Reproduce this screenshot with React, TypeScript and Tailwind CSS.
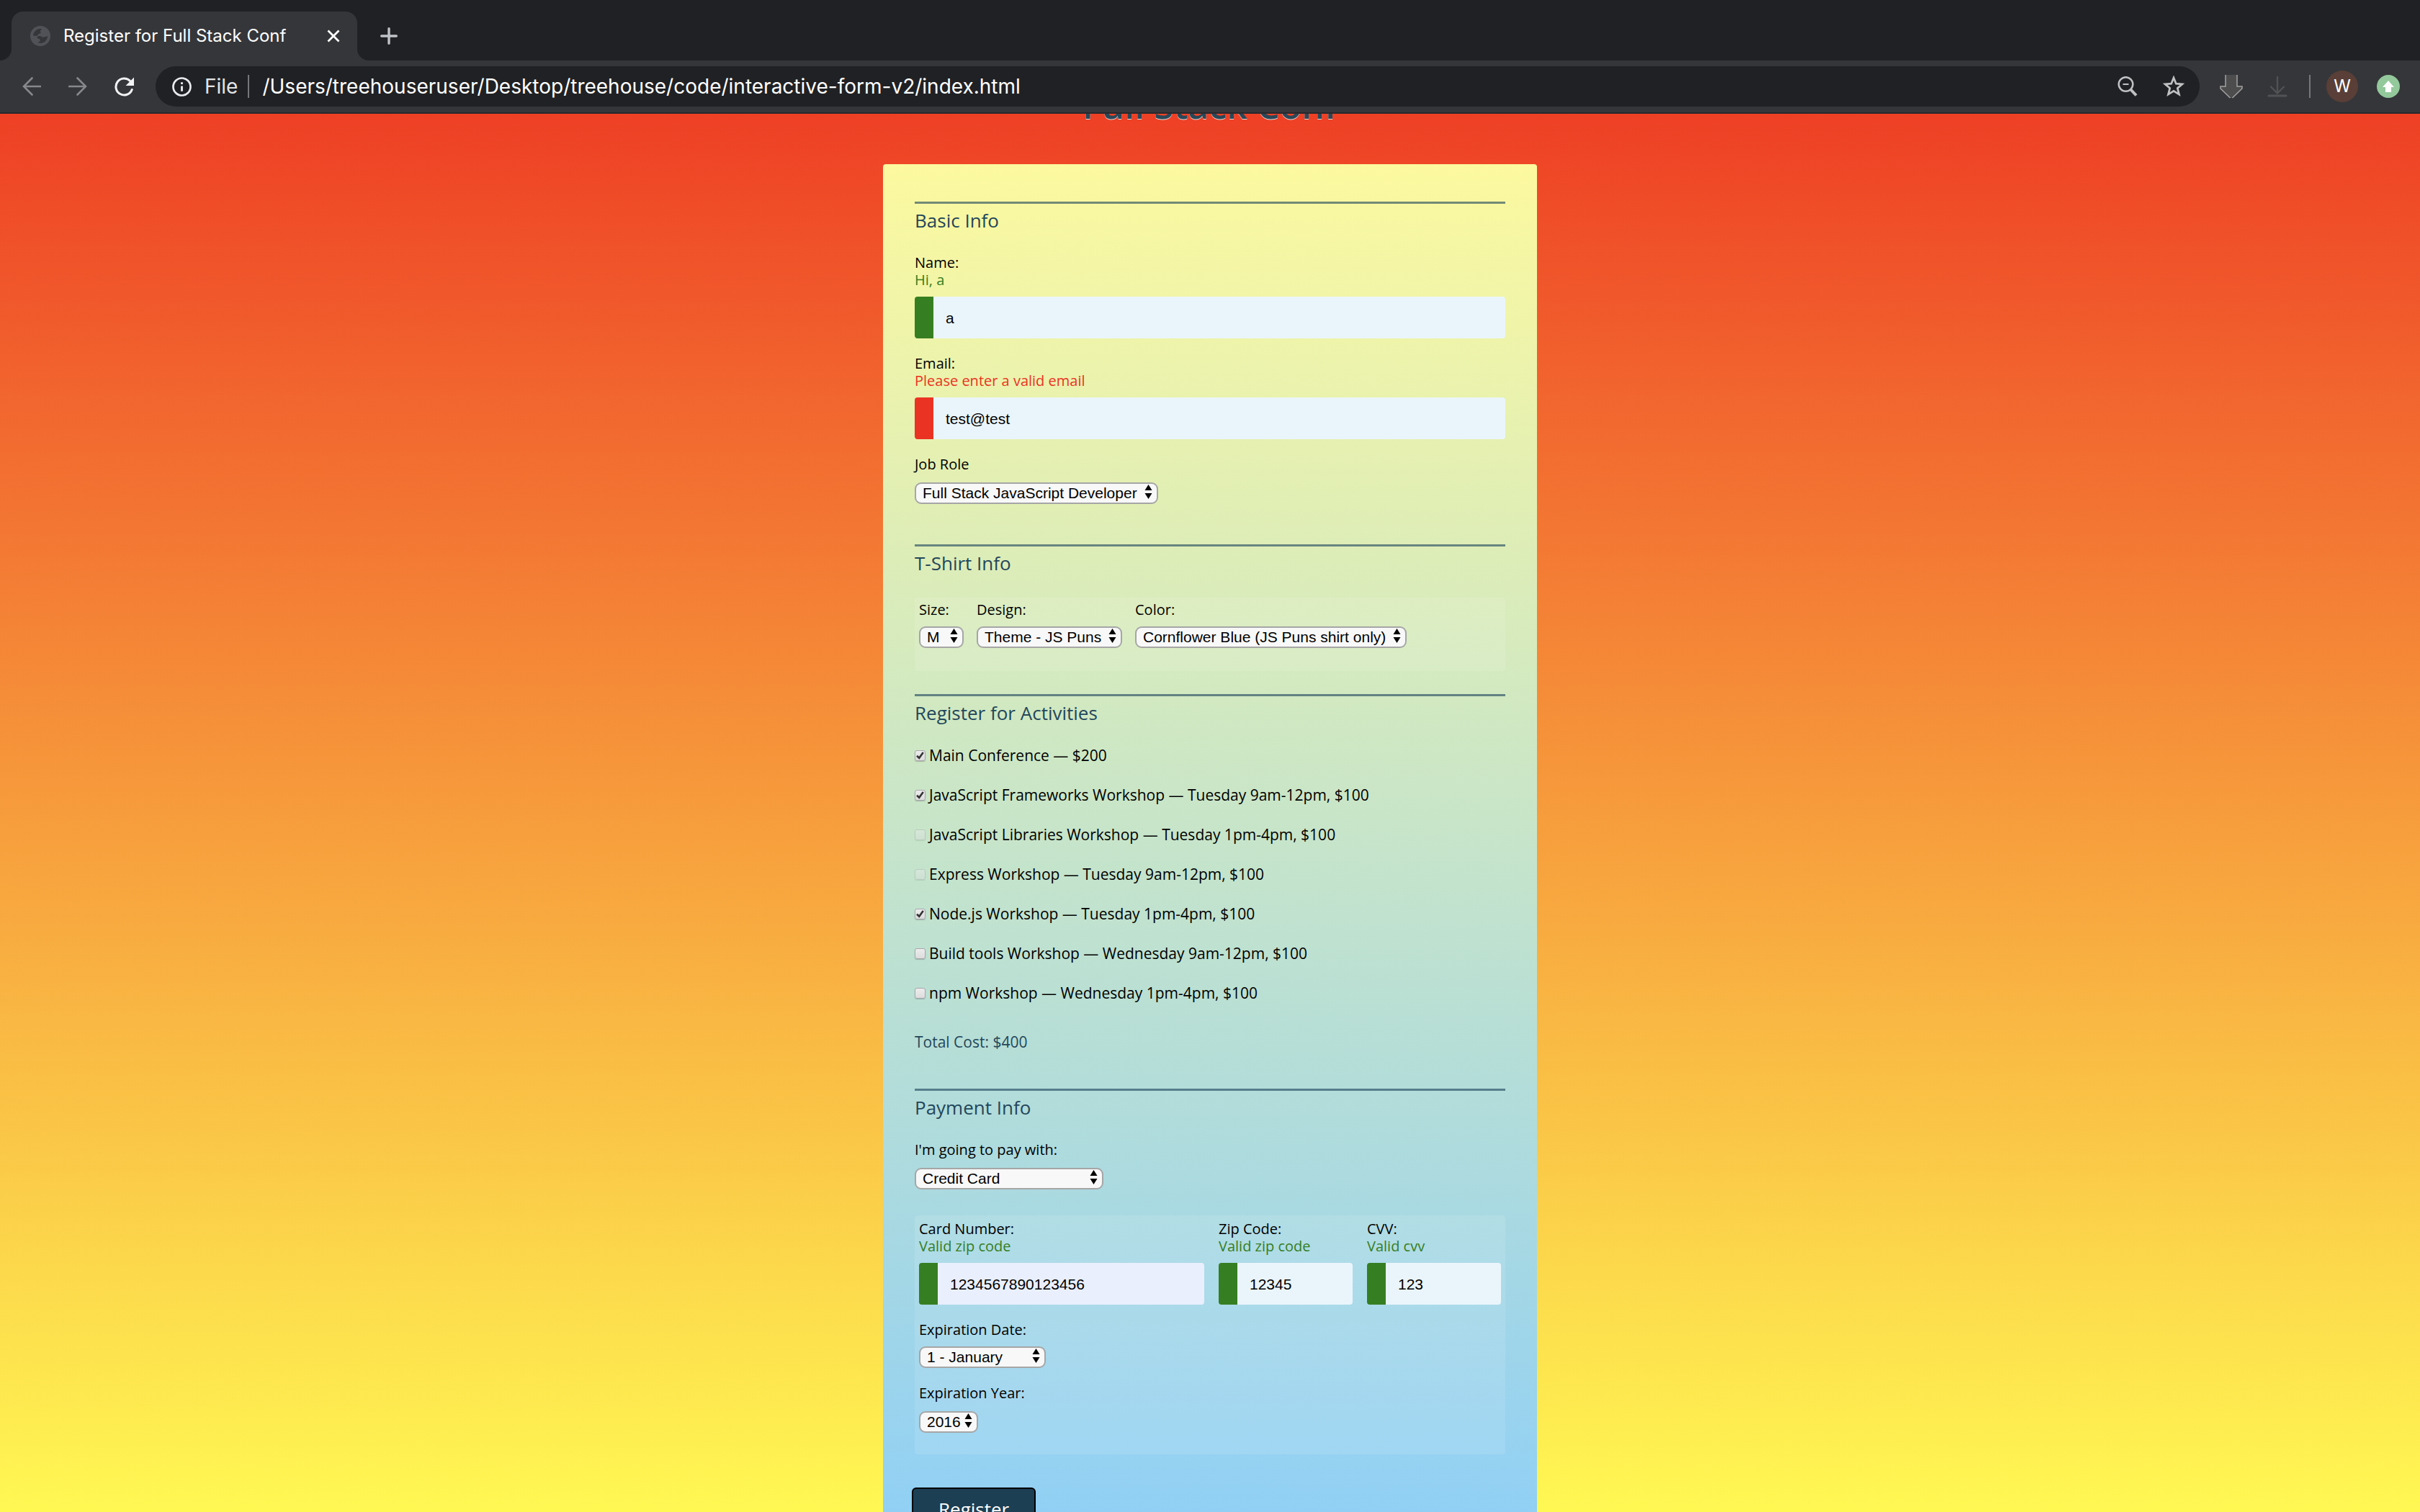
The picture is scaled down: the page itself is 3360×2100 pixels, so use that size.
import type { ReactNode } from 'react';

const workshops = [
  { id: 'all', text: 'Main Conference — $200', checked: true },
  { id: 'js-frameworks', text: 'JavaScript Frameworks Workshop — Tuesday 9am-12pm, $100', checked: true },
  { id: 'js-libs', text: 'JavaScript Libraries Workshop — Tuesday 1pm-4pm, $100', disabled: true },
  { id: 'express', text: 'Express Workshop — Tuesday 9am-12pm, $100', disabled: true },
  { id: 'node', text: 'Node.js Workshop — Tuesday 1pm-4pm, $100', checked: true },
  { id: 'build-tools', text: 'Build tools Workshop — Wednesday 9am-12pm, $100' },
  { id: 'npm', text: 'npm Workshop — Wednesday 1pm-4pm, $100' },
];

function TabStrip() {
  return (
    <div className="flex h-[84px] items-end bg-[#202124] pl-4">
      <div className="relative flex h-[68px] w-[480px] items-center rounded-t-2xl bg-[#35363a] pr-6 pl-[26px]">
        <svg className="absolute bottom-0 -left-4 size-4 fill-[#35363a]" viewBox="0 0 16 16" aria-hidden="true">
          <path d="M16 0v16H0A16 16 0 0 0 16 0z" />
        </svg>
        <svg className="absolute -right-4 bottom-0 size-4 fill-[#35363a]" viewBox="0 0 16 16" aria-hidden="true">
          <path d="M0 0v16h16A16 16 0 0 1 0 0z" />
        </svg>
        <svg className="size-7 shrink-0" viewBox="0 0 28 28" aria-hidden="true">
          <circle cx="14" cy="14" r="14" fill="#505257" />
          <path
            fill="#35363a"
            d="M4 13.5C4.200 9 8 4.500 13 4l3 .2c-.3 1.600-1.800 1.500-2.200 2.800-.3 1.300 1 1.600.8 2.800-.3 1.200-2 .8-3 1.300-1 .6-.6 1.900-1.700 2.400-1.200.5-3.500.3-5.900 0z"
          />
          <path
            fill="#35363a"
            d="M11.500 14.200c2.500-.4 4 .2 4.600 1.600 1.500.3 3-.6 4.400-.6 1.800 0 2.400-1.400 3.500-1.300.2 4.500-3.500 9.700-9.500 10.100-1.700 0-3-.3-4-.7.700-1.500 2.700-.8 3.200-2.300.4-1.300-.9-1.900-.6-3.100-2 .2-3.800-.8-3.600-2.200.1-.8 1-1.300 2-1.500z"
          />
        </svg>
        <span className="ml-[18px] flex-1 text-2xl whitespace-nowrap text-white">Register for Full Stack Conf</span>
        <button type="button" aria-label="Close tab">
          <svg className="size-[18px] stroke-white" viewBox="0 0 18 18" strokeWidth="2.800" aria-hidden="true">
            <path d="M1.500 1.500l15 15M16.500 1.500l-15 15" />
          </svg>
        </button>
      </div>
      <button type="button" aria-label="New tab" className="mb-[22px] ml-8">
        <svg className="size-6 stroke-[#c0c3c7]" viewBox="0 0 24 24" strokeWidth="3.400" strokeLinecap="round" aria-hidden="true">
          <path d="M12 1.700v20.600M1.700 12h20.600" />
        </svg>
      </button>
    </div>
  );
}

function Toolbar() {
  return (
    <div className="flex h-[74px] items-center border-b-2 border-[#28292c] bg-[#35363a] pr-7 pl-[31px]">
      <button type="button" aria-label="Back">
        <svg className="size-[26px] fill-none stroke-[#86888a]" viewBox="0 0 26 26" strokeWidth="2.600" strokeLinecap="round" aria-hidden="true">
          <path d="M25 13H2M13.500 1.500L2 13l11.500 11.500" />
        </svg>
      </button>
      <button type="button" aria-label="Forward" className="ml-[38px]">
        <svg className="size-[26px] fill-none stroke-[#86888a]" viewBox="0 0 26 26" strokeWidth="2.600" strokeLinecap="round" aria-hidden="true">
          <path d="M1 13h23M12.500 1.500L24 13 12.500 24.500" />
        </svg>
      </button>
      <button type="button" aria-label="Reload" className="ml-[38px]">
        <svg className="size-[27px]" viewBox="0 0 27 27" aria-hidden="true">
          <path d="M24.200 17.500A11.500 11.500 0 1 1 21.700 5.500" className="fill-none stroke-[#f1f3f4]" strokeWidth="3" strokeLinecap="round" />
          <path d="M27 .5V12H15.500z" className="fill-[#f1f3f4]" />
        </svg>
      </button>
      <div className="ml-[30px] flex h-14 flex-1 items-center rounded-full bg-[#202124] pr-[21px] pl-[23px]">
        <svg className="size-[27px] fill-none stroke-[#e8eaed]" viewBox="0 0 27 27" aria-hidden="true">
          <circle cx="13.500" cy="13.500" r="12" strokeWidth="2.700" />
          <path d="M13.500 12.500v7.200M13.500 7.200v2.900" strokeWidth="2.900" />
        </svg>
        <span className="ml-[18px] text-[28px] text-[#e2e4e6]">File</span>
        <span className="ml-[14px] h-8 w-0.5 bg-[#75777a]" />
        <input
          aria-label="Address"
          className="ml-[18px] min-w-0 flex-1 bg-transparent text-[28px] text-white outline-none"
          defaultValue="/Users/treehouseruser/Desktop/treehouse/code/interactive-form-v2/index.html"
        />
        <button type="button" aria-label="Zoom out">
          <svg className="size-7 fill-none stroke-[#bfc1c3]" viewBox="0 0 28 28" aria-hidden="true">
            <circle cx="11.500" cy="11" r="9.800" strokeWidth="2.500" />
            <path d="M7.500 11h8" strokeWidth="2" />
            <path d="M18.500 18.500l7.500 8" strokeWidth="4" />
          </svg>
        </button>
        <button type="button" aria-label="Bookmark" className="ml-[35px]">
          <svg className="size-[30px] fill-none stroke-[#bfc1c3]" viewBox="0 0 30 30" strokeWidth="2.700" aria-hidden="true">
            <path d="M15 3l3.300 8.200 8.600.6-6.600 5.600 2.200 8.700L15 21.300l-7.500 4.800 2.200-8.700-6.600-5.600 8.600-.6z" />
          </svg>
        </button>
      </div>
      <button type="button" aria-label="Downloader" className="ml-7">
        <svg className="h-[34px] w-8" viewBox="0 0 32 34" aria-hidden="true">
          <path d="M8 1v16H1v3l13.500 13h3L31 20v-3h-7V1z" fill="#4d4d4d" />
          <path d="M8 1v16H1v3l13.500 13M24 1v16h7v3L17.500 33" fill="none" stroke="#a3a3a3" strokeWidth="1.500" />
        </svg>
      </button>
      <button type="button" aria-label="Save" className="ml-[34px]">
        <svg className="h-[30px] w-7 fill-none stroke-[#505254]" viewBox="0 0 28 30" strokeWidth="2.400" strokeLinecap="round" aria-hidden="true">
          <path d="M14 2v22M5 15.500l9 9 9-9" />
          <path d="M2 28h24" strokeWidth="3.200" />
        </svg>
      </button>
      <span className="ml-[30px] h-8 w-0.5 bg-[#75777a]" />
      <button type="button" aria-label="Profile" className="ml-[22px] grid size-11 place-items-center rounded-full bg-[#593f37] text-2xl text-white">
        W
      </button>
      <button type="button" aria-label="Update" className="ml-[26px]">
        <svg className="size-8" viewBox="0 0 32 32" aria-hidden="true">
          <circle cx="16" cy="16" r="16" fill="#93c99b" />
          <path d="M16 8l8 9h-4v7h-8v-7H8z" fill="#fff" />
        </svg>
      </button>
    </div>
  );
}

function Group({ title, className = '', children }: { title: string; className?: string; children: ReactNode }) {
  return (
    <fieldset className={`min-w-0 ${className}`}>
      <legend className="w-full border-t-[3px] border-[#184059]/60 pt-[5px] text-[26px] leading-9 text-[#24475a]">{title}</legend>
      {children}
    </fieldset>
  );
}

function TextField({ id, label, hint, value, valid = true, fill = 'bg-[#eaf5fb]' }: {
  id: string; label: string; hint: string; value: string; valid?: boolean; fill?: string;
}) {
  return (
    <div className="flex min-w-0 flex-col">
      <label htmlFor={id} className="pt-px">{label}</label>
      <span className={valid ? 'text-[#367e22]' : 'text-[#eb3323]'}>{hint}</span>
      <input
        id={id}
        defaultValue={value}
        className={`mt-[11px] h-[58px] w-full min-w-0 rounded border-l-[26px] pt-px pr-4 pl-[17px] font-['Liberation_Sans',Arial,sans-serif] text-[21px] outline-none ${fill} ${valid ? 'border-[#367e22]' : 'border-[#eb3323]'}`}
      />
    </div>
  );
}

function SelectField({ id, label, value, width, gap = 'mt-[11px]' }: {
  id: string; label: string; value: string; width: string; gap?: string;
}) {
  return (
    <div className="flex flex-col items-start">
      <label htmlFor={id} className="pt-px">{label}</label>
      <div className={`relative max-w-full ${width} ${gap}`}>
        <select
          id={id}
          className="block h-[30px] w-full appearance-none rounded-[9px] border-2 border-[#a6a6a6] bg-[#f8f8f8] pl-[9px] font-['Liberation_Sans',Arial,sans-serif] text-[21px] leading-[26px]"
        >
          <option>{value}</option>
        </select>
        <svg className="pointer-events-none absolute top-[3px] right-2 h-5 w-[11px]" viewBox="0 0 11 20" aria-hidden="true">
          <path d="M5.500 0l5 8H.5zM5.500 20l5-8H.5z" />
        </svg>
      </div>
    </div>
  );
}

function Activity({ id, text, checked = false, disabled = false }: {
  id: string; text: string; checked?: boolean; disabled?: boolean;
}) {
  return (
    <label htmlFor={id} className="flex items-center gap-[5px] text-[21px]">
      <span className={disabled ? 'relative opacity-40' : 'relative'}>
        <input
          id={id}
          type="checkbox"
          defaultChecked={checked}
          disabled={disabled}
          className="peer block size-[15px] appearance-none rounded-[3px] border border-[#a9a6ae] bg-linear-to-b from-[#ececec] to-[#dcdcdc] shadow-[0_1px_1px_rgba(0,0,0,0.2)]"
        />
        <svg className="pointer-events-none absolute inset-0 hidden size-[15px] fill-none stroke-[#333] peer-checked:block" viewBox="0 0 15 15" strokeWidth="2.600" aria-hidden="true">
          <path d="M3 7.800l3.200 3L11.800 3" />
        </svg>
      </span>
      {text}
    </label>
  );
}

export default function App() {
  return (
    <div className="flex h-screen flex-col overflow-hidden font-['Inter','Liberation_Sans',sans-serif]">
      <header className="shrink-0">
        <TabStrip />
        <Toolbar />
      </header>
      <main className="flex min-h-0 flex-1 flex-col items-center overflow-hidden bg-linear-to-b/srgb from-[#ee4025] to-[#fff853] font-['Open_Sans','Noto_Sans',sans-serif] text-xl leading-6 text-black">
        <h1 className="-mt-[37px] shrink-0 text-[50px] leading-none font-semibold text-[#2b4757] [text-shadow:0_1px_0_#dcdcdc]">
          Full Stack Conf
        </h1>
        <form className="mt-[57px] w-full max-w-[908px] shrink-0 rounded bg-linear-to-b/srgb from-[#fcf99f] to-[#8fcff6] px-11 pt-[52px] pb-2">
          <Group title="Basic Info">
            <div className="mt-7 flex flex-col gap-[22px]">
              <TextField id="name" label="Name:" hint="Hi, a" value="a" />
              <TextField id="mail" label="Email:" hint="Please enter a valid email" value="test@test" valid={false} />
              <SelectField id="title" label="Job Role" value="Full Stack JavaScript Developer" width="w-[338px]" gap="mt-[13px]" />
            </div>
          </Group>
          <Group title="T-Shirt Info" className="mt-14">
            <div className="mt-[30px] flex gap-[18px] rounded bg-white/10 px-1.5 pt-1 pb-8">
              <SelectField id="size" label="Size:" value="M" width="w-[62px]" />
              <SelectField id="design" label="Design:" value="Theme - JS Puns" width="w-[202px]" />
              <SelectField id="color" label="Color:" value="Cornflower Blue (JS Puns shirt only)" width="w-[377px]" />
            </div>
          </Group>
          <Group title="Register for Activities" className="mt-8">
            <div className="mt-[29px] flex flex-col items-start gap-[31px]">
              {workshops.map((w) => (
                <Activity key={w.id} {...w} />
              ))}
            </div>
            <p className="mt-11 text-[21px] text-[#24475a]">Total Cost: $400</p>
          </Group>
          <Group title="Payment Info" className="mt-[53px]">
            <div className="mt-7">
              <SelectField id="payment" label="I'm going to pay with:" value="Credit Card" width="w-[262px]" gap="mt-[13px]" />
            </div>
            <div className="mt-9 flex flex-col gap-[22px] rounded bg-white/10 px-1.5 pt-1.5 pb-[30px]">
              <div className="grid grid-cols-[1fr_186px_186px] gap-5">
                <TextField id="cc-num" label="Card Number:" hint="Valid zip code" value="1234567890123456" fill="bg-[#e9effd]" />
                <TextField id="zip" label="Zip Code:" hint="Valid zip code" value="12345" />
                <TextField id="cvv" label="CVV:" hint="Valid cvv" value="123" />
              </div>
              <SelectField id="exp-month" label="Expiration Date:" value="1 - January" width="w-44" />
              <SelectField id="exp-year" label="Expiration Year:" value="2016" width="w-[82px]" gap="mt-[13px]" />
            </div>
          </Group>
          <button type="submit" className="mt-[46px] -ml-1 rounded-md border-2 border-black bg-[#1c3f54] px-[35px] pt-2.5 pb-3.5 text-[26px] leading-9 text-white">
            Register
          </button>
        </form>
      </main>
    </div>
  );
}
